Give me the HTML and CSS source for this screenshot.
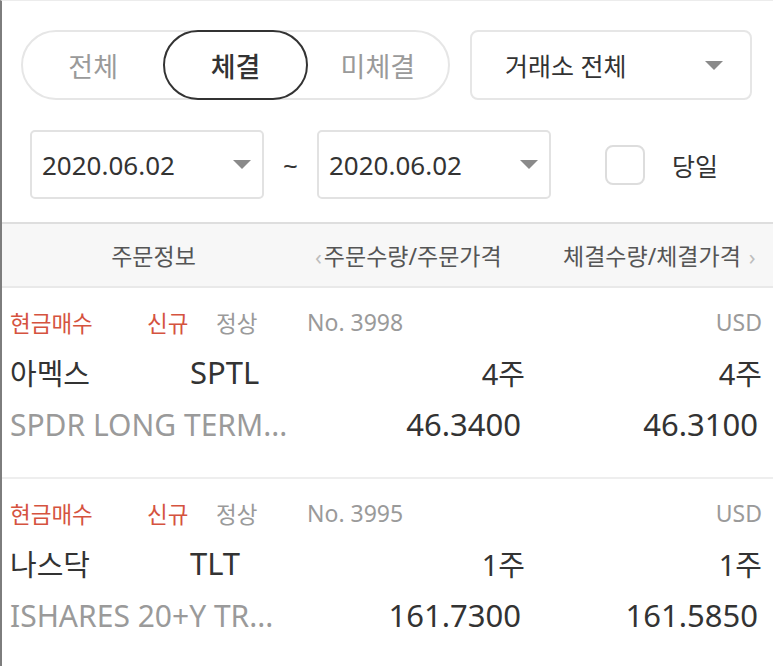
FILE: index.html
```html
<!DOCTYPE html>
<html lang="ko">
<head>
<meta charset="utf-8">
<link rel="stylesheet" href="styles.css">
</head>
<body>
<div class="page">
  <div class="filters">
    <div class="row-top">
      <div class="seg">
        <div class="seg-item">전체</div>
        <div class="seg-item active">체결</div>
        <div class="seg-item">미체결</div>
      </div>
      <div class="select">
        <span class="select-text">거래소 전체</span>
        <span class="caret"></span>
      </div>
    </div>
    <div class="row-date">
      <div class="date">
        <span class="date-text">2020.06.02</span>
        <span class="caret"></span>
      </div>
      <div class="tilde">~</div>
      <div class="date">
        <span class="date-text">2020.06.02</span>
        <span class="caret"></span>
      </div>
      <div class="check"></div>
      <div class="check-label">당일</div>
    </div>
  </div>

  <div class="thead">
    <div class="th th1">주문정보</div>
    <div class="th th2"><span class="arrow">‹</span>주문수량/주문가격</div>
    <div class="th th3">체결수량/체결가격<span class="arrow arrow-r">›</span></div>
  </div>

  <div class="order">
    <div class="meta">
      <span class="m-type">현금매수</span>
      <span class="m-new">신규</span>
      <span class="m-state">정상</span>
      <span class="m-no">No. 3998</span>
      <span class="m-cur">USD</span>
    </div>
    <div class="line2">
      <span class="name">아멕스</span>
      <span class="ticker">SPTL</span>
      <span class="qty">4주</span>
      <span class="qty">4주</span>
    </div>
    <div class="line3">
      <span class="full">SPDR LONG TERM...</span>
      <span class="price">46.3400</span>
      <span class="price">46.3100</span>
    </div>
  </div>

  <div class="order">
    <div class="meta">
      <span class="m-type">현금매수</span>
      <span class="m-new">신규</span>
      <span class="m-state">정상</span>
      <span class="m-no">No. 3995</span>
      <span class="m-cur">USD</span>
    </div>
    <div class="line2">
      <span class="name">나스닥</span>
      <span class="ticker">TLT</span>
      <span class="qty">1주</span>
      <span class="qty">1주</span>
    </div>
    <div class="line3">
      <span class="full">ISHARES 20+Y TR...</span>
      <span class="price">161.7300</span>
      <span class="price">161.5850</span>
    </div>
  </div>
</div>
</body>
</html>
```

FILE: styles.css
```css
html, body {
  margin: 0;
  padding: 0;
  background: #ffffff;
}

body {
  font-family: "Noto Sans", "Noto Sans CJK KR", sans-serif;
  color: #333333;
}

.page {
  min-height: 665px;
  border-left: 2px solid #7d7d7d;
  border-top: 1px solid #ececec;
  overflow: hidden;
}

.filters {
  padding: 29px 21px 0 19px;
}

.row-top {
  display: flex;
  gap: 20px;
  height: 70px;
}

.seg {
  box-sizing: border-box;
  width: 429px;
  height: 70px;
  border: 2px solid #e6e6e6;
  border-radius: 35px;
  display: flex;
}

.seg-item {
  flex: 1;
  display: flex;
  align-items: center;
  justify-content: center;
  font-size: 27px;
  color: #9a9a9a;
}

.seg-item.active {
  box-sizing: border-box;
  height: 70px;
  margin: -2px 0;
  border: 2px solid #333333;
  border-radius: 35px;
  color: #333333;
  font-weight: 500;
}

.select {
  box-sizing: border-box;
  flex: 1;
  height: 70px;
  border: 2px solid #e6e6e6;
  border-radius: 8px;
  display: flex;
  align-items: center;
  justify-content: space-between;
  padding: 0 27px 0 33px;
}

.select-text {
  font-size: 25px;
  color: #333333;
}

.caret {
  width: 0;
  height: 0;
  border-left: 9px solid transparent;
  border-right: 9px solid transparent;
  border-top: 9px solid #8a8a8a;
}

.row-date {
  display: flex;
  align-items: center;
  margin-top: 30px;
  padding-left: 9px;
  height: 69px;
}

.date {
  box-sizing: border-box;
  width: 234px;
  height: 69px;
  border: 2px solid #e2e2e2;
  border-radius: 5px;
  display: flex;
  align-items: center;
  justify-content: space-between;
  padding: 0 11px 0 10px;
}

.date-text {
  font-size: 26px;
  color: #333333;
}

.tilde {
  width: 53px;
  text-align: center;
  font-size: 26px;
  color: #333333;
}

.check {
  box-sizing: border-box;
  width: 40px;
  height: 40px;
  margin-left: 54px;
  border: 2px solid #dddddd;
  border-radius: 8px;
}

.check-label {
  margin-left: 27px;
  font-size: 25px;
  color: #333333;
}

.thead {
  margin-top: 23px;
  height: 62px;
  border-top: 2px solid #dedede;
  border-bottom: 2px solid #e9e9e9;
  background: #f7f7f7;
  display: flex;
  align-items: center;
  font-size: 23px;
  color: #555555;
}

.th1 {
  width: 303px;
  text-align: center;
}

.th2 {
  width: 258px;
  padding-left: 10px;
  box-sizing: border-box;
  white-space: nowrap;
}

.th3 {
  flex: 1;
  white-space: nowrap;
}

.arrow {
  color: #bdbdbd;
  font-size: 22px;
  margin-right: 2px;
}

.arrow-r {
  margin-left: 8px;
  margin-right: 0;
}

.order {
  padding: 16px 11px 31px 8px;
  border-bottom: 2px solid #eeeeee;
  display: grid;
  grid-template-columns: 180px 120px 215px 237px;
  row-gap: 0;
}

.meta {
  grid-column: 1 / 5;
  display: flex;
  align-items: center;
  height: 36px;
  font-size: 22.5px;
  color: #9a9a9a;
}

.m-type {
  width: 137px;
  color: #d5533f;
}

.m-new {
  width: 69px;
  color: #d5533f;
}

.m-state {
  width: 91px;
}

.m-no {
  font-size: 23px;
}

.m-cur {
  margin-left: auto;
  font-size: 23px;
}

.line2 {
  grid-column: 1 / 5;
  display: grid;
  grid-template-columns: subgrid;
  align-items: center;
  height: 44px;
  margin-top: 10px;
}

.name {
  font-size: 29px;
  color: #333333;
}

.ticker {
  font-size: 31px;
  color: #333333;
}

.qty {
  font-size: 29px;
  text-align: right;
  color: #333333;
}

.line3 {
  grid-column: 1 / 5;
  display: grid;
  grid-template-columns: subgrid;
  align-items: center;
  height: 44px;
  margin-top: 8px;
}

.full {
  grid-column: 1 / 3;
  font-size: 30px;
  color: #9a9a9a;
  white-space: nowrap;
}

.price {
  font-size: 31px;
  text-align: right;
  padding-right: 4px;
  color: #333333;
}
```
